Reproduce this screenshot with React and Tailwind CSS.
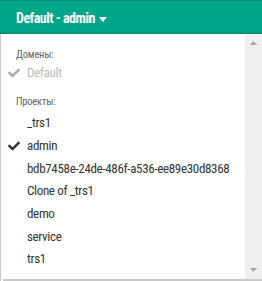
import React from "react";
import { FaCheck } from "react-icons/fa";

const items = ["_trs1", "admin", "bdb7458e-24de-486f-a536-ee89e30d8368", "Clone of _trs1", "demo", "service", "trs1"];

export default function App() {
  return (
    <div className="w-[262px] h-[281px] overflow-hidden bg-white flex flex-col" style={{ fontFamily: "'Liberation Sans Narrow', 'Roboto Condensed', 'DejaVu Sans Condensed', sans-serif" }}>
      <div className="h-[34px] shrink-0 bg-[#00a68a] border-t border-[#00906f] border-b-2 border-b-[#009578] flex items-center pl-[16px] pt-[4px] text-white text-[14px] font-bold tracking-[-0.5px]">
        <span>Default - admin</span>
        <svg width="8" height="5" viewBox="0 0 8 5" className="ml-[4px] mt-[1px]"><path d="M0 0h8L4 5z" fill="#fff" /></svg>
      </div>
      <div className="flex flex-1 min-h-0">
        <div className="w-[3px] border-l border-[#c8c8c8] bg-white" />
        <div className="flex-1 flex flex-col border-b-2 border-[#c8c8c8]">
          <div className="pl-[13px] mt-[14px] h-[14px] leading-[14px] text-[10.5px] text-[#666] tracking-[-0.2px]">Домены:</div>
          <div className="h-[22px] flex items-center text-[13px] text-[#bbb] tracking-[-0.33px]">
            <FaCheck className="ml-[5px] w-[12px] h-[12px] text-[#aaa]" />
            <span className="ml-[7px]">Default</span>
          </div>
          <div className="pl-[13px] mt-[11px] h-[14px] leading-[14px] text-[10.5px] text-[#666] tracking-[-0.2px]">Проекты:</div>
          <div className="mt-[2.67px] flex flex-col">
            {items.map((it) => (
              <div key={it} className="h-[22.67px] flex items-center text-[13px] text-[#333] tracking-[-0.33px]">
                {it === "admin" ? (
                  <FaCheck className="ml-[5px] w-[12px] h-[12px] text-[#333]" />
                ) : (
                  <span className="ml-[5px] w-[12px]" />
                )}
                <span className="ml-[7px] whitespace-nowrap">{it}</span>
              </div>
            ))}
          </div>
        </div>
        <div className="w-[17px] bg-[#f0f0f0] flex flex-col justify-between items-center pt-[7px] pb-[7px] border-b-2 border-[#c8c8c8]">
          <svg width="7" height="4" viewBox="0 0 7 4"><path d="M3.5 0L7 4H0z" fill="#a3a3a3" /></svg>
          <svg width="7" height="4" viewBox="0 0 7 4"><path d="M0 0h7L3.5 4z" fill="#a3a3a3" /></svg>
        </div>
      </div>
    </div>
  );
}
